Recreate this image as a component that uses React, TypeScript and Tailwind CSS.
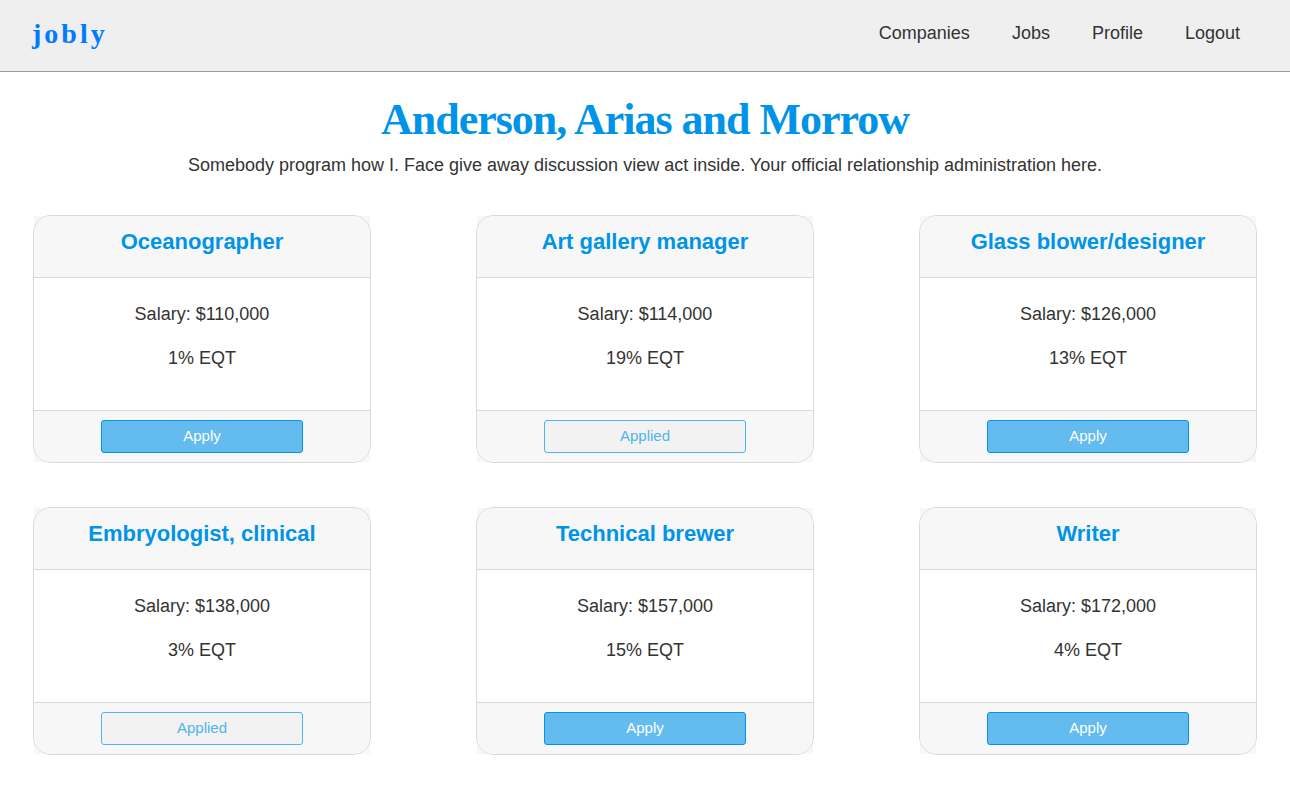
const jobs = [
  { title: "Oceanographer", salary: "$110,000", equity: "1%", applied: false },
  { title: "Art gallery manager", salary: "$114,000", equity: "19%", applied: true },
  { title: "Glass blower/designer", salary: "$126,000", equity: "13%", applied: false },
  { title: "Embryologist, clinical", salary: "$138,000", equity: "3%", applied: true },
  { title: "Technical brewer", salary: "$157,000", equity: "15%", applied: false },
  { title: "Writer", salary: "$172,000", equity: "4%", applied: false },
];

type Job = (typeof jobs)[number];

function JobCard({ job }: { job: Job }) {
  return (
    <article className="border border-transparent bg-[#f7f7f7] bg-clip-padding">
      <div className="-m-px overflow-hidden rounded-[18px] border border-[#dadada] text-center">
        <h2 className="h-[62px] border-b border-[#dadada] bg-[#f7f7f7] pt-3 text-[22px] leading-7 font-bold text-[#0094e8]">
          {job.title}
        </h2>
        <div className="flex h-[132px] flex-col gap-5 bg-white pt-6 leading-6">
          <p>Salary: {job.salary}</p>
          <p>{job.equity} EQT</p>
        </div>
        <div className="flex justify-center border-t border-[#dadada] bg-[#f7f7f7] py-[9px]">
          <button
            className={
              job.applied
                ? "h-[33px] w-3/5 rounded-[3px] border border-[#50b5ec] bg-[#f2f2f2] text-[15px] text-[#50b5ec]"
                : "h-[33px] w-3/5 rounded-[3px] border border-[#0094e8] bg-[#64bbee] text-[15px] text-white"
            }
          >
            {job.applied ? "Applied" : "Apply"}
          </button>
        </div>
      </div>
    </article>
  );
}

export default function App() {
  return (
    <div className="font-['Liberation_Sans',Arial,sans-serif] text-[18px] text-[#333]">
      <header className="flex h-[72px] items-center justify-between border-b border-[#999] bg-[#efefef] pr-[50px] pb-1 pl-8">
        <a href="#" className="font-['Liberation_Serif',serif] text-[28px] font-bold tracking-[3px] text-[#007bff]">
          jobly
        </a>
        <nav className="flex gap-[42px]">
          <a href="#companies">Companies</a>
          <a href="#jobs">Jobs</a>
          <a href="#profile">Profile</a>
          <a href="#logout">Logout</a>
        </nav>
      </header>
      <main className="px-[33px] pt-6 pb-8">
        <h1 className="text-center font-['Liberation_Serif',serif] text-[44px] leading-[48px] font-bold tracking-[-1px] text-[#0094e8]">
          Anderson, Arias and Morrow
        </h1>
        <p className="mt-[9px] text-center leading-6">
          Somebody program how I. Face give away discussion view act inside. Your official relationship administration here.
        </p>
        <div className="mt-[38px] grid grid-cols-3 gap-x-[105px] gap-y-11">
          {jobs.map((job) => (
            <JobCard key={job.title} job={job} />
          ))}
        </div>
      </main>
    </div>
  );
}
